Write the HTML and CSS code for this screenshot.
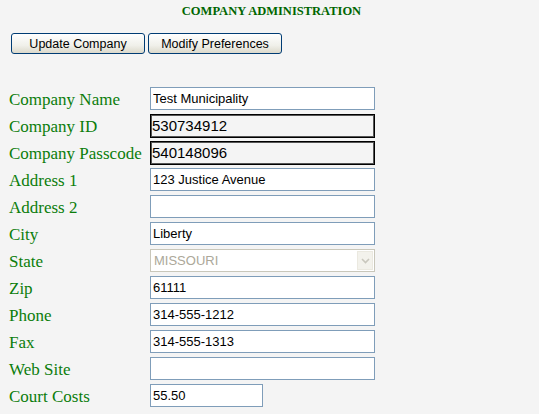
FILE: index.html
```html
<!DOCTYPE html>
<html lang="en">
  <head>
    <meta charset="utf-8">
    <title>Company Administration</title>
    <link rel="stylesheet" href="styles.css">
  </head>
  <body>
    <h1 class="title">Company Administration</h1>

    <div class="actions">
      <button type="button" class="button">Update Company</button>
      <button type="button" class="button">Modify Preferences</button>
    </div>

    <form class="company">
      <label class="label">Company Name</label>
      <input type="text" class="field" value="Test Municipality">

      <label class="label">Company ID</label>
      <input type="text" class="field locked" value="530734912" readonly>

      <label class="label">Company Passcode</label>
      <input type="text" class="field locked" value="540148096" readonly>

      <label class="label">Address 1</label>
      <input type="text" class="field" value="123 Justice Avenue">

      <label class="label">Address 2</label>
      <input type="text" class="field" value="">

      <label class="label">City</label>
      <input type="text" class="field" value="Liberty">

      <label class="label">State</label>
      <div class="select-wrap">
        <select class="select" disabled>
          <option>MISSOURI</option>
        </select>
        <span class="select-arrow">
          <svg width="9" height="6" viewBox="0 0 9 6"><path d="M1 1l3.5 3.5L8 1" fill="none" stroke="#c9c7bd" stroke-width="1.6"/></svg>
        </span>
      </div>

      <label class="label">Zip</label>
      <input type="text" class="field" value="61111">

      <label class="label">Phone</label>
      <input type="text" class="field" value="314-555-1212">

      <label class="label">Fax</label>
      <input type="text" class="field" value="314-555-1313">

      <label class="label">Web Site</label>
      <input type="text" class="field" value="">

      <label class="label">Court Costs</label>
      <input type="text" class="field short" value="55.50">
    </form>
  </body>
</html>
```

FILE: styles.css
```css
body {
    margin: 0;
    background: #f4f4f4;
    font-family: "Liberation Sans", Arial, sans-serif;
}
.title {
    margin: 0;
    padding-top: 4px;
    font: bold 12.5px/14px "Liberation Serif", "Times New Roman", serif;
    text-transform: uppercase;
    text-align: center;
    color: #006600;
    padding-left: 4px;
}
.actions {
    display: flex;
    gap: 3px;
    margin-top: 15px;
    padding-left: 11px;
}
.button {
    width: 134px;
    height: 21px;
    padding: 0;
    font: 12.5px "Liberation Sans", Arial, sans-serif;
    color: #000;
    border: 1px solid #003c74;
    border-radius: 3px;
    background: linear-gradient(#ffffff, #f0f0ea 60%, #dcd9cb);
}
.company {
    display: grid;
    grid-template-columns: 141px 225px;
    grid-auto-rows: 27px;
    align-items: center;
    margin-top: 31px;
    padding-left: 9px;
}
.label {
    font: 17px "Liberation Serif", "Times New Roman", serif;
    color: #0b7d0b;
    padding-top: 3px;
}
.field {
    box-sizing: border-box;
    width: 225px;
    height: 23px;
    margin: 0;
    padding: 0 2px;
    border: 1px solid #7f9db9;
    background: #fff;
    font: 13px "Liberation Sans", Arial, sans-serif;
    color: #000;
}
.field.locked {
    height: 24px;
    padding: 0 1px;
    border: 1px solid #000;
    box-shadow: inset 0 0 0 1px #555;
    background: #f4f4f4;
    font-size: 15px;
}
.field.short {
    width: 113px;
}
.select-wrap {
    position: relative;
    width: 225px;
    height: 23px;
}
.select {
    appearance: none;
    box-sizing: border-box;
    width: 100%;
    height: 100%;
    margin: 0;
    padding: 0 3px;
    border: 1px solid #c9c7ba;
    background: #fff;
    font: 13px "Liberation Sans", Arial, sans-serif;
    color: #aca899;
    opacity: 1;
}
.select-arrow {
    position: absolute;
    top: 2px;
    right: 2px;
    width: 16px;
    height: 19px;
    display: flex;
    align-items: center;
    justify-content: center;
    background: #f3f2ec;
    border: 1px solid #ebe9e0;
    box-sizing: border-box;
}
```
